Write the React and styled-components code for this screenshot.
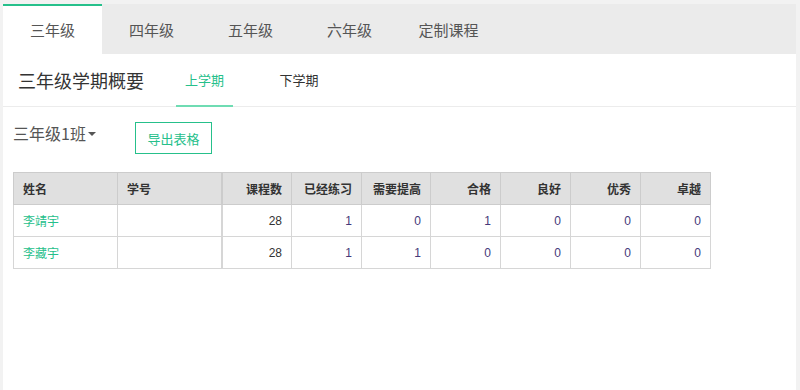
import React, { useState } from "react";
import styled, { createGlobalStyle } from "styled-components";

const GlobalStyle = createGlobalStyle`
  html, body {
    margin: 0;
    padding: 0;
    background: #f2f2f2;
    font-family: "Microsoft YaHei", "Noto Sans CJK SC", "Liberation Sans", sans-serif;
  }
`;

const Page = styled.div`
  width: 800px;
  height: 390px;
  padding: 4px 4px 0 3px;
  box-sizing: border-box;
`;

const Card = styled.div`
  background: #ffffff;
  height: 386px;
  display: flex;
  flex-direction: column;
`;

const TabBar = styled.div`
  display: flex;
  height: 50px;
  background: #ebebeb;
`;

const Tab = styled.div`
  width: 99px;
  display: flex;
  align-items: center;
  justify-content: center;
  font-size: 15px;
  color: #555555;
  box-sizing: border-box;
  background: ${(p) => (p.$active ? "#ffffff" : "transparent")};
  border-top: 2px solid ${(p) => (p.$active ? "#26c08b" : "transparent")};
  padding-bottom: 2px;
  cursor: pointer;
`;

const TitleRow = styled.div`
  display: flex;
  align-items: stretch;
  height: 52px;
  border-bottom: 1px solid #ececec;
  padding-left: 15px;
`;

const Title = styled.div`
  font-size: 18px;
  color: #333333;
  display: flex;
  align-items: center;
  width: 158px;
`;

const TermTab = styled.div`
  width: ${(p) => p.$w}px;
  display: flex;
  align-items: center;
  justify-content: center;
  font-size: 13px;
  color: ${(p) => (p.$active ? "#26c08b" : "#333333")};
  border-bottom: 2px solid ${(p) => (p.$active ? "#6fdcb3" : "transparent")};
  margin-bottom: -1px;
  box-sizing: border-box;
  cursor: pointer;
`;

const Body = styled.div`
  padding: 14px 0 0 10px;
`;

const Toolbar = styled.div`
  display: flex;
  align-items: flex-start;
  gap: 39px;
  height: 50px;
`;

const ClassSelect = styled.div`
  font-size: 16px;
  color: #555555;
  display: flex;
  align-items: center;
  gap: 2px;
  margin-top: 0;
`;

const Caret = styled.span`
  width: 0;
  height: 0;
  border-left: 4px solid transparent;
  border-right: 4px solid transparent;
  border-top: 4px solid #555555;
  margin-top: 2px;
`;

const ExportButton = styled.button`
  height: 32px;
  width: 77px;
  margin-top: 1px;
  background: #ffffff;
  border: 1px solid #26c08b;
  color: #26c08b;
  font-family: inherit;
  font-size: 13px;
  padding: 0;
  cursor: pointer;
`;

const Table = styled.table`
  border-collapse: collapse;
  font-size: 12px;
  margin-top: 1px;
`;

const Th = styled.th`
  height: 32px;
  box-sizing: border-box;
  background: #e0e0e0;
  border: 1px solid #cccccc;
  border-left-width: ${(p) => (p.$thick ? 2 : 1)}px;
  color: #333333;
  font-weight: bold;
  text-align: ${(p) => (p.$left ? "left" : "right")};
  padding: 0 9px;
  width: ${(p) => p.$w}px;
`;

const Td = styled.td`
  height: 32px;
  box-sizing: border-box;
  border: 1px solid #d6d6d6;
  border-left-width: ${(p) => (p.$thick ? 2 : 1)}px;
  text-align: ${(p) => (p.$left ? "left" : "right")};
  padding: 0 9px;
  color: ${(p) => p.$color || "#333333"};
  font-family: ${(p) => (p.$num ? '"Liberation Sans", Arial, sans-serif' : "inherit")};
`;

const columns = [
  { key: "name", label: "姓名", w: 104, left: true },
  { key: "no", label: "学号", w: 104, left: true },
  { key: "courses", label: "课程数", w: 70, thick: true },
  { key: "done", label: "已经练习", w: 70 },
  { key: "improve", label: "需要提高", w: 69 },
  { key: "pass", label: "合格", w: 70 },
  { key: "good", label: "良好", w: 70 },
  { key: "great", label: "优秀", w: 70 },
  { key: "best", label: "卓越", w: 70 },
];

const rows = [
  { name: "李靖宇", no: "", courses: 28, done: 1, improve: 0, pass: 1, good: 0, great: 0, best: 0 },
  { name: "李藏宇", no: "", courses: 28, done: 1, improve: 1, pass: 0, good: 0, great: 0, best: 0 },
];

const grades = ["三年级", "四年级", "五年级", "六年级", "定制课程"];

const App = () => {
  const [grade, setGrade] = useState(0);
  const [term, setTerm] = useState(0);

  const cellColor = (key) => {
    if (key === "name") return "#26c08b";
    if (key === "courses") return "#333333";
    return "#45397a";
  };

  return (
    <Page>
      <GlobalStyle />
      <Card>
        <TabBar>
          {grades.map((g, i) => (
            <Tab key={g} $active={grade === i} onClick={() => setGrade(i)}>
              {g}
            </Tab>
          ))}
        </TabBar>
        <TitleRow>
          <Title>三年级学期概要</Title>
          <TermTab $w={57} $active={term === 0} onClick={() => setTerm(0)}>
            上学期
          </TermTab>
          <TermTab $w={132} $active={term === 1} onClick={() => setTerm(1)}>
            下学期
          </TermTab>
        </TitleRow>
        <Body>
          <Toolbar>
            <ClassSelect>
              三年级1班<Caret />
            </ClassSelect>
            <ExportButton>导出表格</ExportButton>
          </Toolbar>
          <Table>
            <thead>
              <tr>
                {columns.map((c) => (
                  <Th key={c.key} $w={c.w} $left={c.left} $thick={c.thick}>
                    {c.label}
                  </Th>
                ))}
              </tr>
            </thead>
            <tbody>
              {rows.map((r) => (
                <tr key={r.name}>
                  {columns.map((c) => (
                    <Td
                      key={c.key}
                      $left={c.left}
                      $thick={c.thick}
                      $num={!c.left}
                      $color={cellColor(c.key)}
                    >
                      {r[c.key]}
                    </Td>
                  ))}
                </tr>
              ))}
            </tbody>
          </Table>
        </Body>
      </Card>
    </Page>
  );
};

export default App;
